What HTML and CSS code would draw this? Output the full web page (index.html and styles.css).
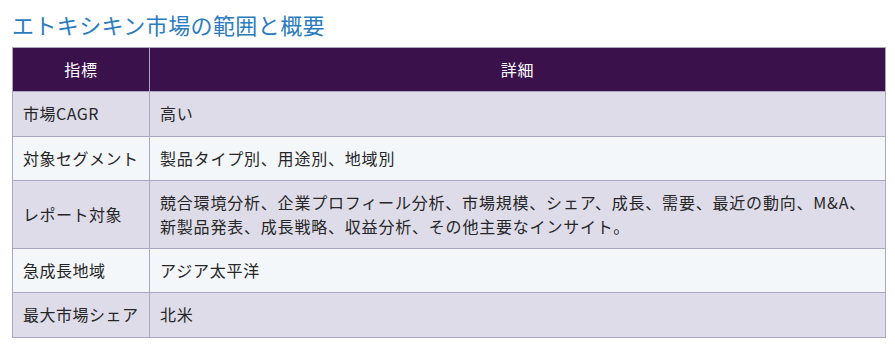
FILE: index.html
```html
<!DOCTYPE html>
<html lang="ja">
<head>
<meta charset="utf-8">
<title>エトキシキン市場の範囲と概要</title>
<link rel="stylesheet" href="styles.css">
</head>
<body>
<main class="page">
  <h2 class="title">エトキシキン市場の範囲と概要</h2>
  <table class="scope">
    <colgroup><col class="col-key"><col></colgroup>
    <thead>
      <tr><th>指標</th><th>詳細</th></tr>
    </thead>
    <tbody>
      <tr><td>市場CAGR</td><td>高い</td></tr>
      <tr><td>対象セグメント</td><td>製品タイプ別、用途別、地域別</td></tr>
      <tr><td>レポート対象</td><td>競合環境分析、企業プロフィール分析、市場規模、シェア、成長、需要、最近の動向、M&amp;A、新製品発表、成長戦略、収益分析、その他主要なインサイト。</td></tr>
      <tr><td>急成長地域</td><td>アジア太平洋</td></tr>
      <tr><td>最大市場シェア</td><td>北米</td></tr>
    </tbody>
  </table>
</main>
</body>
</html>
```
FILE: styles.css
```css
html, body {
  margin: 0;
  padding: 0;
  background: #ffffff;
}
body {
  font-family: "Noto Sans CJK JP", "Noto Sans", sans-serif;
  color: #262626;
}
.page {
  padding: 0 9px 0 12px;
}
.title {
  margin: 0;
  padding-top: 9px;
  height: 38px;
  font-size: 22px;
  line-height: 30px;
  font-weight: 400;
  color: #2b7bc0;
  letter-spacing: 0.4px;
}
.scope {
  width: 874px;
  table-layout: fixed;
  border-collapse: collapse;
  font-size: 16px;
  line-height: 23.4px;
  letter-spacing: 0.8px;
}
.col-key {
  width: 137px;
}
.scope th, .scope td {
  border: 1px solid #aba7c3;
  padding: 10px 10px;
  text-align: left;
  vertical-align: middle;
}
.scope td:first-child {
  white-space: nowrap;
  letter-spacing: 0.5px;
}
.scope th {
  background: #3a114b;
  color: #ffffff;
  font-weight: 400;
  text-align: center;
}
.scope tbody tr:nth-child(odd) td {
  background: #dfdcea;
}
.scope tbody tr:nth-child(even) td {
  background: #f3f7fa;
}
```
